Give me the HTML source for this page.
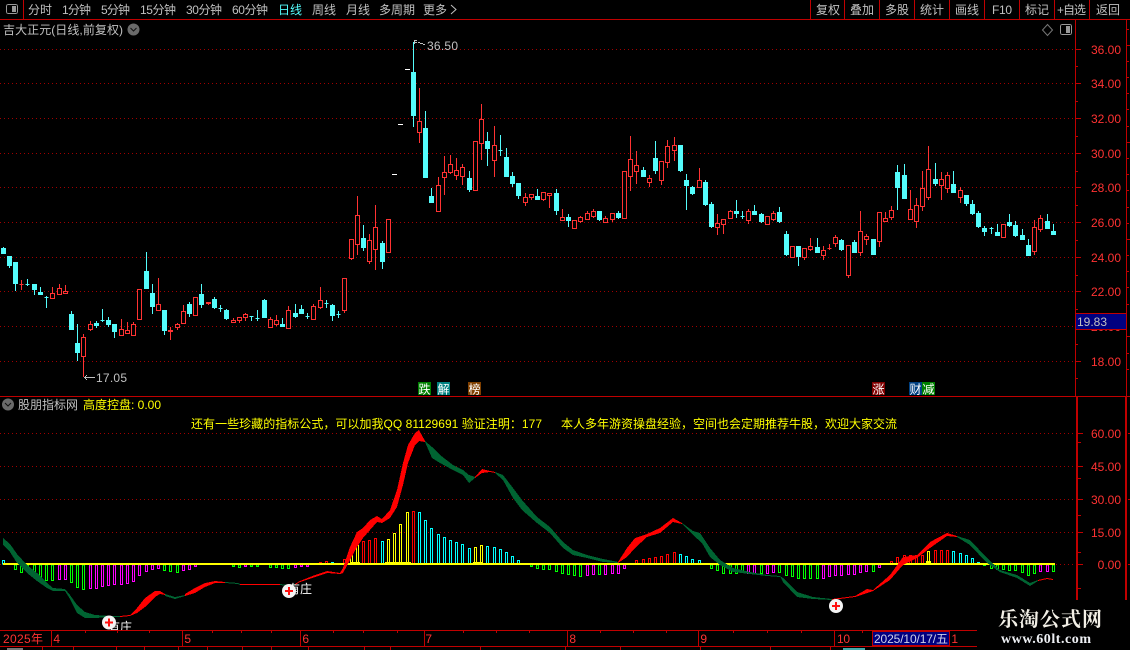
<!DOCTYPE html>
<html><head><meta charset="utf-8"><style>
html,body{margin:0;padding:0;background:#000;overflow:hidden}
svg{display:block}
text{font-family:"WenQuanYi Zen Hei","Liberation Sans","Noto Sans CJK SC",sans-serif;font-size:12px;fill:#c0c0c0}
.n{font-family:"Liberation Sans",sans-serif}
.r{fill:#ff3232;font-family:"Liberation Sans",sans-serif;text-anchor:end}
.y{fill:#ffff00}
.w{fill:#fff}
</style></head><body>
<svg width="1130" height="650" viewBox="0 0 1130 650" xmlns="http://www.w3.org/2000/svg" shape-rendering="crispEdges">
<defs><pattern id="d" width="4" height="1" patternUnits="userSpaceOnUse"><rect width="1" height="1" fill="#a00000"/></pattern></defs>
<rect width="1130" height="650" fill="#000"/>
<!-- grid -->
<g fill="url(#d)">
<rect y="49" width="1075" height="1"/><rect y="83" width="1075" height="1"/><rect y="118" width="1075" height="1"/><rect y="153" width="1075" height="1"/><rect y="187" width="1075" height="1"/><rect y="222" width="1075" height="1"/><rect y="257" width="1075" height="1"/><rect y="291" width="1075" height="1"/><rect y="326" width="1075" height="1"/><rect y="361" width="1075" height="1"/><rect y="433" width="1075" height="1"/><rect y="466" width="1075" height="1"/><rect y="499" width="1075" height="1"/><rect y="532" width="1075" height="1"/><rect y="564" width="1075" height="1"/>
</g>
<!-- frame -->
<path d="M0 19.5H1130M0 396.5H1130M23.5 0V19M810.5 0V19M844.5 0V19M879.5 0V19M914.5 0V19M949.5 0V19M984.5 0V19M1019.5 0V19M1054.5 0V19M1089.5 0V19M1075.5 19V396M1126.5 19V396M0 630.5H977M0 646.5H977" stroke="#c00000" fill="none"/>
<path d="M1077 397V600M1126 397V600" stroke="#c00000" stroke-width="2" fill="none"/>
<!-- axis ticks -->
<path d="M1075 49.5h6M1075 83.5h6M1075 118.5h6M1075 153.5h6M1075 187.5h6M1075 222.5h6M1075 257.5h6M1075 291.5h6M1075 361.5h6M1075 66.5h3M1075 101.5h3M1075 136.5h3M1075 171.5h3M1075 205.5h3M1075 240.5h3M1075 275.5h3M1075 309.5h3M1075 344.5h3M1075 378.5h3M1078 433.5h5M1078 466.5h5M1078 499.5h5M1078 532.5h5M1078 564.5h5M1078 442.5h3M1078 478.5h3M1078 515.5h3M1078 552.5h3M1078 588.5h3M1127 45.5h3M1127 142.5h3M1127 239.5h3M1127 336.5h3M1127 29.5h2M1127 61.5h2M1127 77.5h2M1127 93.5h2M1127 109.5h2M1127 126.5h2M1127 158.5h2M1127 174.5h2M1127 190.5h2M1127 207.5h2M1127 223.5h2M1127 255.5h2M1127 271.5h2M1127 287.5h2M1127 304.5h2M1127 353.5h2M1127 369.5h2M1128 433.5h2M1128 499.5h2M1128 564.5h2" stroke="#c00000" fill="none"/>
<!-- red wicks -->
<path fill="none" stroke="#ff3232" d="M21.5 280V290M52.5 287V298M59.5 284V295M65.5 285V293M83.5 334V377M90.5 321V331M121.5 319V335M127.5 322V333M133.5 322V335M158.5 278V311M170.5 327V340M177.5 323V330M183.5 305V323M208.5 302V305M233.5 318V322M239.5 317V323M245.5 313V321M270.5 317V327M276.5 315V326M288.5 306V328M313.5 304V319M320.5 287V309M344.5 278V313M351.5 239V260M357.5 196V255M369.5 234V264M375.5 205V270M419.5 88V143M438.5 177V211M444.5 156V195M450.5 155V174M456.5 158V180M462.5 164V185M481.5 104V160M494.5 126V177M525.5 193V206M531.5 194V200M543.5 192V201M549.5 193V208M562.5 209V220M580.5 216V223M587.5 211V220M593.5 209V218M605.5 216V222M612.5 213V222M630.5 136V191M636.5 151V184M649.5 175V187M661.5 161V185M667.5 140V168M674.5 137V161M699.5 168V187M717.5 214V235M723.5 219V234M730.5 210V219M748.5 209V224M773.5 211V221M804.5 248V260M810.5 238V251M823.5 246V260M829.5 244V250M835.5 235V247M848.5 245V278M860.5 211V256M866.5 234V245M879.5 212V247M885.5 212V222M891.5 206V220M910.5 190V219M916.5 198V228M922.5 171V211M928.5 146V200M941.5 172V200M947.5 172V193M960.5 187V203M1003.5 224V237M1034.5 220V255M1040.5 215V232"/>
<!-- red bodies -->
<path fill="#000" stroke="#ff3232" d="M19.5 284.5h4v0h-4zM50.5 293.5h4v5h-4zM57.5 288.5h4v6h-4zM63.5 291.5h4v2h-4zM81.5 337.5h4v19h-4zM88.5 324.5h4v5h-4zM119.5 329.5h4v6h-4zM125.5 330.5h4v3h-4zM131.5 324.5h4v11h-4zM137.5 289.5h4v30h-4zM156.5 304.5h4v6h-4zM168.5 330.5h4v1h-4zM175.5 324.5h4v3h-4zM181.5 311.5h4v12h-4zM193.5 297.5h4v18h-4zM206.5 302.5h4v1h-4zM231.5 320.5h4v2h-4zM237.5 317.5h4v3h-4zM243.5 314.5h4v3h-4zM268.5 319.5h4v8h-4zM274.5 320.5h4v4h-4zM286.5 310.5h4v18h-4zM311.5 306.5h4v13h-4zM318.5 300.5h4v7h-4zM342.5 278.5h4v32h-4zM349.5 239.5h4v19h-4zM355.5 215.5h4v29h-4zM367.5 240.5h4v21h-4zM373.5 227.5h4v22h-4zM386.5 219.5h4v33h-4zM417.5 121.5h4v11h-4zM436.5 185.5h4v26h-4zM442.5 172.5h4v5h-4zM448.5 164.5h4v8h-4zM454.5 170.5h4v5h-4zM460.5 167.5h4v9h-4zM473.5 141.5h4v49h-4zM479.5 119.5h4v24h-4zM492.5 145.5h4v15h-4zM523.5 197.5h4v5h-4zM529.5 194.5h4v3h-4zM541.5 192.5h4v7h-4zM547.5 193.5h4v2h-4zM560.5 217.5h4v3h-4zM572.5 220.5h4v8h-4zM578.5 217.5h4v4h-4zM585.5 213.5h4v6h-4zM591.5 211.5h4v5h-4zM603.5 218.5h4v4h-4zM610.5 213.5h4v6h-4zM622.5 171.5h4v47h-4zM628.5 159.5h4v17h-4zM634.5 165.5h4v6h-4zM647.5 178.5h4v4h-4zM659.5 161.5h4v19h-4zM665.5 146.5h4v16h-4zM672.5 145.5h4v5h-4zM697.5 180.5h4v7h-4zM715.5 223.5h4v4h-4zM721.5 219.5h4v5h-4zM728.5 211.5h4v7h-4zM746.5 211.5h4v9h-4zM765.5 216.5h4v8h-4zM771.5 213.5h4v6h-4zM790.5 246.5h4v11h-4zM802.5 248.5h4v9h-4zM808.5 246.5h4v3h-4zM821.5 250.5h4v5h-4zM827.5 248.5h4v0h-4zM833.5 237.5h4v6h-4zM846.5 245.5h4v30h-4zM858.5 231.5h4v21h-4zM864.5 236.5h4v3h-4zM877.5 212.5h4v29h-4zM883.5 218.5h4v3h-4zM889.5 210.5h4v7h-4zM908.5 209.5h4v10h-4zM914.5 205.5h4v16h-4zM920.5 188.5h4v18h-4zM926.5 169.5h4v28h-4zM939.5 179.5h4v6h-4zM945.5 175.5h4v13h-4zM958.5 190.5h4v7h-4zM1001.5 224.5h4v13h-4zM1032.5 227.5h4v24h-4zM1038.5 218.5h4v11h-4z"/>
<!-- cyan wicks -->
<path fill="none" stroke="#54fcfc" d="M3.5 247V254M9.5 256V268M15.5 262V291M27.5 279V286M34.5 284V295M40.5 287V294M46.5 296V308M71.5 311V329M77.5 324V361M96.5 321V328M102.5 309V322M108.5 317V327M114.5 324V338M146.5 252V289M152.5 284V314M164.5 310V335M189.5 302V317M201.5 284V308M214.5 297V309M220.5 305V312M226.5 309V320M251.5 316V321M257.5 310V321M264.5 299V318M282.5 318V326M295.5 304V318M301.5 305V314M307.5 313V319M326.5 300V308M332.5 304V321M338.5 311V318M363.5 225V251M382.5 241V269M413.5 42V127M425.5 111V177M431.5 188V203M469.5 171V192M487.5 132V166M500.5 135V156M506.5 148V176M512.5 172V187M518.5 183V199M537.5 189V199M556.5 189V215M568.5 214V227M599.5 211V221M618.5 211V219M643.5 167V176M655.5 141V174M680.5 145V172M686.5 174V210M692.5 186V195M705.5 180V206M711.5 202V228M736.5 200V218M742.5 211V219M754.5 205V215M761.5 213V223M779.5 207V223M786.5 231V256M798.5 246V266M817.5 238V252M841.5 239V251M854.5 240V253M873.5 239V254M897.5 165V210M904.5 164V199M935.5 163V186M953.5 171V192M966.5 195V206M972.5 200V215M978.5 211V228M984.5 226V236M991.5 227V234M997.5 224V235M1009.5 214V227M1015.5 221V237M1022.5 229V240M1028.5 239V256M1047.5 214V229M1053.5 224V235"/>
<!-- cyan bodies -->
<path fill="#54fcfc" stroke="#54fcfc" d="M1.5 248.5h4v5h-4zM7.5 256.5h4v9h-4zM13.5 262.5h4v21h-4zM25.5 284.5h4v0h-4zM32.5 284.5h4v5h-4zM38.5 292.5h4v2h-4zM44.5 297.5h4v0h-4zM69.5 314.5h4v15h-4zM75.5 343.5h4v9h-4zM94.5 323.5h4v2h-4zM100.5 320.5h4v0h-4zM106.5 320.5h4v4h-4zM112.5 324.5h4v7h-4zM144.5 271.5h4v17h-4zM150.5 293.5h4v13h-4zM162.5 310.5h4v20h-4zM187.5 304.5h4v9h-4zM199.5 294.5h4v10h-4zM212.5 299.5h4v8h-4zM218.5 308.5h4v0h-4zM224.5 310.5h4v8h-4zM249.5 316.5h4v0h-4zM255.5 318.5h4v0h-4zM262.5 300.5h4v17h-4zM280.5 324.5h4v2h-4zM293.5 313.5h4v3h-4zM299.5 309.5h4v4h-4zM305.5 316.5h4v0h-4zM324.5 303.5h4v0h-4zM330.5 305.5h4v10h-4zM336.5 314.5h4v0h-4zM361.5 238.5h4v9h-4zM380.5 243.5h4v18h-4zM411.5 72.5h4v43h-4zM423.5 128.5h4v49h-4zM429.5 196.5h4v6h-4zM467.5 178.5h4v11h-4zM485.5 141.5h4v7h-4zM498.5 150.5h4v0h-4zM504.5 157.5h4v19h-4zM510.5 176.5h4v7h-4zM516.5 183.5h4v12h-4zM535.5 196.5h4v3h-4zM554.5 193.5h4v17h-4zM566.5 217.5h4v3h-4zM597.5 211.5h4v8h-4zM616.5 213.5h4v4h-4zM641.5 170.5h4v6h-4zM653.5 158.5h4v12h-4zM678.5 145.5h4v25h-4zM684.5 180.5h4v5h-4zM690.5 187.5h4v6h-4zM703.5 182.5h4v22h-4zM709.5 204.5h4v22h-4zM734.5 211.5h4v2h-4zM740.5 216.5h4v0h-4zM752.5 211.5h4v3h-4zM759.5 214.5h4v7h-4zM777.5 212.5h4v9h-4zM784.5 234.5h4v20h-4zM796.5 246.5h4v10h-4zM815.5 247.5h4v5h-4zM839.5 240.5h4v9h-4zM852.5 242.5h4v10h-4zM871.5 239.5h4v15h-4zM895.5 172.5h4v15h-4zM902.5 175.5h4v23h-4zM933.5 179.5h4v4h-4zM951.5 184.5h4v8h-4zM964.5 195.5h4v8h-4zM970.5 204.5h4v9h-4zM976.5 213.5h4v13h-4zM982.5 228.5h4v3h-4zM989.5 228.5h4v0h-4zM995.5 232.5h4v3h-4zM1007.5 222.5h4v3h-4zM1013.5 225.5h4v10h-4zM1020.5 235.5h4v4h-4zM1026.5 245.5h4v10h-4zM1045.5 221.5h4v7h-4zM1051.5 231.5h4v3h-4z"/>
<!-- limit-up dashes -->
<path d="M405 69.5h5M398 124.5h5M392 174.5h5" stroke="#fff" fill="none"/>
<!-- price annotations -->
<path d="M414 40.5h3M414.5 40v4M414 42.5h3M418 42.5h2M420 43.5h3M423 44.5h2" stroke="#c0c0c0" fill="none"/>
<path d="M84 377.5h11M85 376.5h1M86 375.5h1M85 378.5h1M86 379.5h1" stroke="#c0c0c0" fill="none"/>
<text class="n" x="427" y="50" textLength="31">36.50</text>
<text class="n" x="96" y="382" textLength="31">17.05</text>
<!-- axis labels -->
<text class="r" x="1121" y="54">36.00</text>
<text class="r" x="1121" y="88">34.00</text>
<text class="r" x="1121" y="123">32.00</text>
<text class="r" x="1121" y="158">30.00</text>
<text class="r" x="1121" y="192">28.00</text>
<text class="r" x="1121" y="227">26.00</text>
<text class="r" x="1121" y="262">24.00</text>
<text class="r" x="1121" y="296">22.00</text>
<text class="r" x="1121" y="331">20.00</text>
<text class="r" x="1121" y="366">18.00</text>
<rect x="1075.5" y="313.5" width="51" height="16" fill="#000080" stroke="#c00000"/>
<text class="n" x="1077" y="326" textLength="30" fill="#c8c8e8">19.83</text>
<text class="r" x="1121" y="438">60.00</text>
<text class="r" x="1121" y="471">45.00</text>
<text class="r" x="1121" y="504">30.00</text>
<text class="r" x="1121" y="537">15.00</text>
<text class="r" x="1121" y="569">0.00</text>
<!-- toolbar -->
<g fill="none" stroke="#999">
<rect x="6.5" y="4.5" width="11" height="9" rx="2"/>
<rect x="1060.5" y="24.5" width="11" height="10" rx="2"/>
<path d="M1047.5 24.5l5 5.5-5 5.5-5-5.5z" stroke="#777" shape-rendering="auto"/>
</g>
<rect x="12" y="6" width="4" height="6" fill="#999"/>
<rect x="1066" y="26" width="4" height="7" fill="#999"/>
<text x="28" y="14" textLength="24">分时</text>
<text x="62" y="14" textLength="29">1分钟</text>
<text x="101" y="14" textLength="29">5分钟</text>
<text x="140" y="14" textLength="36">15分钟</text>
<text x="186" y="14" textLength="36">30分钟</text>
<text x="232" y="14" textLength="36">60分钟</text>
<text x="278" y="14" textLength="24" style="fill:#54fcfc">日线</text>
<text x="312" y="14" textLength="24">周线</text>
<text x="346" y="14" textLength="24">月线</text>
<text x="379" y="14" textLength="36">多周期</text>
<text x="423" y="14" textLength="24">更多</text>
<path d="M451 5l5 4.5-5 4.5" fill="none" stroke="#c0c0c0" shape-rendering="auto"/>
<text x="816" y="14" textLength="24">复权</text>
<text x="850" y="14" textLength="24">叠加</text>
<text x="885" y="14" textLength="24">多股</text>
<text x="920" y="14" textLength="24">统计</text>
<text x="955" y="14" textLength="24">画线</text>
<text class="n" x="992" y="14" textLength="20">F10</text>
<text x="1025" y="14" textLength="24">标记</text>
<text x="1057" y="14" textLength="29">+自选</text>
<text x="1096" y="14" textLength="24">返回</text>
<text x="3" y="34" textLength="120">吉大正元(日线,前复权)</text>
<circle cx="133.5" cy="29.5" r="6" fill="#6a6a6a" shape-rendering="auto"/>
<path d="M130.5 28l3 3 3-3" fill="none" stroke="#111" shape-rendering="auto"/>
<!-- tags -->
<rect x="418" y="382" width="13" height="13" fill="#008000"/><text class="w" x="418.5" y="393.5">跌</text>
<rect x="437" y="382" width="13" height="13" fill="#008080"/><text class="w" x="437.5" y="393.5">解</text>
<rect x="468" y="382" width="13" height="13" fill="#804000"/><text class="w" x="468.5" y="393.5">榜</text>
<rect x="872" y="382" width="13" height="13" fill="#800000"/><text class="w" x="872.5" y="393.5">涨</text>
<rect x="909" y="382" width="13" height="13" fill="#004080"/><text class="w" x="909.5" y="393.5">财</text>
<rect x="922" y="382" width="13" height="13" fill="#008000"/><text class="w" x="922.5" y="393.5">减</text>
<!-- lower titles -->
<circle cx="8" cy="404.5" r="6" fill="#6a6a6a" shape-rendering="auto"/>
<path d="M5 403l3 3 3-3" fill="none" stroke="#111" shape-rendering="auto"/>
<text x="18" y="409" textLength="60">股朋指标网</text>
<text class="y" x="83" y="409" textLength="78">高度控盘: 0.00</text>
<text class="y" x="191" y="428" textLength="351">还有一些珍藏的指标公式，可以加我QQ 81129691 验证注明：177</text>
<text class="y" x="561" y="428" textLength="336">本人多年游资操盘经验，空间也会定期推荐牛股，欢迎大家交流</text>
<!-- bars -->
<g fill="none">
<path stroke="#00ff00" d="M14.5 565h2V569.5h-2zM20.5 565h2V572.5h-2zM26.5 565h2V570.5h-2zM33.5 565h2V573.5h-2zM39.5 565h2V577.5h-2zM45.5 565h2V580.5h-2zM51.5 565h2V580.5h-2zM70.5 565h2V582.5h-2zM76.5 565h2V587.5h-2zM82.5 565h2V589.5h-2zM163.5 565h2V570.5h-2zM169.5 565h2V571.5h-2zM176.5 565h2V572.5h-2zM232.5 565h2V566.5h-2zM238.5 565h2V567.5h-2zM250.5 565h2V566.5h-2zM256.5 565h2V566.5h-2zM269.5 565h2V567.5h-2zM275.5 565h2V567.5h-2zM281.5 565h2V568.5h-2zM287.5 565h2V568.5h-2zM530.5 565h2V566.5h-2zM536.5 565h2V568.5h-2zM542.5 565h2V569.5h-2zM548.5 565h2V569.5h-2zM555.5 565h2V571.5h-2zM561.5 565h2V573.5h-2zM567.5 565h2V574.5h-2zM573.5 565h2V575.5h-2zM579.5 565h2V576.5h-2zM598.5 565h2V574.5h-2zM710.5 565h2V568.5h-2zM716.5 565h2V570.5h-2zM722.5 565h2V573.5h-2zM729.5 565h2V573.5h-2zM735.5 565h2V573.5h-2zM741.5 565h2V572.5h-2zM760.5 565h2V573.5h-2zM778.5 565h2V572.5h-2zM785.5 565h2V575.5h-2zM791.5 565h2V576.5h-2zM797.5 565h2V578.5h-2zM803.5 565h2V578.5h-2zM809.5 565h2V578.5h-2zM816.5 565h2V578.5h-2zM872.5 565h2V571.5h-2zM983.5 565h2V565.5h-2zM990.5 565h2V568.5h-2zM996.5 565h2V569.5h-2zM1002.5 565h2V569.5h-2zM1008.5 565h2V570.5h-2zM1014.5 565h2V570.5h-2zM1021.5 565h2V572.5h-2zM1027.5 565h2V575.5h-2zM1033.5 565h2V573.5h-2zM1052.5 565h2V571.5h-2z"/>
<path stroke="#ff00ff" d="M58.5 565h2V579.5h-2zM64.5 565h2V579.5h-2zM89.5 565h2V588.5h-2zM95.5 565h2V588.5h-2zM101.5 565h2V586.5h-2zM107.5 565h2V585.5h-2zM113.5 565h2V584.5h-2zM120.5 565h2V584.5h-2zM126.5 565h2V583.5h-2zM132.5 565h2V581.5h-2zM138.5 565h2V575.5h-2zM145.5 565h2V571.5h-2zM151.5 565h2V569.5h-2zM157.5 565h2V568.5h-2zM182.5 565h2V570.5h-2zM188.5 565h2V569.5h-2zM194.5 565h2V566.5h-2zM244.5 565h2V566.5h-2zM294.5 565h2V567.5h-2zM300.5 565h2V566.5h-2zM306.5 565h2V566.5h-2zM586.5 565h2V575.5h-2zM592.5 565h2V574.5h-2zM604.5 565h2V574.5h-2zM611.5 565h2V573.5h-2zM617.5 565h2V573.5h-2zM623.5 565h2V568.5h-2zM747.5 565h2V573.5h-2zM753.5 565h2V573.5h-2zM766.5 565h2V573.5h-2zM772.5 565h2V572.5h-2zM822.5 565h2V578.5h-2zM828.5 565h2V576.5h-2zM834.5 565h2V575.5h-2zM840.5 565h2V575.5h-2zM847.5 565h2V574.5h-2zM853.5 565h2V574.5h-2zM859.5 565h2V572.5h-2zM865.5 565h2V571.5h-2zM878.5 565h2V567.5h-2zM1039.5 565h2V571.5h-2zM1046.5 565h2V571.5h-2z"/>
<path stroke="#ff0000" d="M319.5 562.5h2V564h-2zM325.5 561.5h2V564h-2zM343.5 559.5h2V564h-2zM362.5 541.5h2V564h-2zM368.5 540.5h2V564h-2zM374.5 538.5h2V564h-2zM412.5 511.5h2V564h-2zM635.5 560.5h2V564h-2zM642.5 559.5h2V564h-2zM648.5 558.5h2V564h-2zM654.5 557.5h2V564h-2zM660.5 556.5h2V564h-2zM666.5 554.5h2V564h-2zM673.5 552.5h2V564h-2zM890.5 561.5h2V564h-2zM896.5 557.5h2V564h-2zM903.5 555.5h2V564h-2zM909.5 555.5h2V564h-2zM915.5 555.5h2V564h-2zM921.5 555.5h2V564h-2zM934.5 550.5h2V564h-2zM940.5 550.5h2V564h-2zM946.5 550.5h2V564h-2z"/>
<path stroke="#ffff00" d="M350.5 553.5h2V564h-2zM356.5 545.5h2V564h-2zM387.5 539.5h2V564h-2zM393.5 533.5h2V564h-2zM399.5 524.5h2V564h-2zM406.5 512.5h2V564h-2zM474.5 547.5h2V564h-2zM480.5 545.5h2V564h-2zM927.5 551.5h2V564h-2z"/>
<path stroke="#00ffff" d="M2.5 560.5h2V564h-2zM331.5 562.5h2V564h-2zM381.5 541.5h2V564h-2zM418.5 512.5h2V564h-2zM424.5 520.5h2V564h-2zM430.5 528.5h2V564h-2zM437.5 534.5h2V564h-2zM443.5 537.5h2V564h-2zM449.5 540.5h2V564h-2zM455.5 542.5h2V564h-2zM461.5 544.5h2V564h-2zM468.5 548.5h2V564h-2zM486.5 546.5h2V564h-2zM493.5 547.5h2V564h-2zM499.5 549.5h2V564h-2zM505.5 552.5h2V564h-2zM511.5 556.5h2V564h-2zM517.5 560.5h2V564h-2zM679.5 554.5h2V564h-2zM685.5 556.5h2V564h-2zM691.5 559.5h2V564h-2zM698.5 560.5h2V564h-2zM952.5 551.5h2V564h-2zM959.5 553.5h2V564h-2zM965.5 555.5h2V564h-2zM971.5 558.5h2V564h-2zM977.5 562.5h2V564h-2z"/>
</g>
<!-- zero line -->
<rect x="3" y="563" width="1052" height="2" fill="#ffff00"/>
<path d="M350 562h10v1h-10zM385 562h26v1h-26zM473 562h10v1h-10zM926 561h5v2h-5z" fill="#ffff00"/>
<!-- ribbon -->
<g fill="#006432">
<polygon points="3,538 10,544 17,554 27,565 37,573 47,583 53,588 65,589 70,595 77,605 85,612 95,615 110,616 120,616 120,617 110,617 95,618 85,618 77,613 70,599 65,591 53,591 47,588 37,581 27,573 17,563 10,552 3,545"/>
<polygon points="165,594 175,597 185,595 185,596 175,599 165,596"/>
<polygon points="225,582 238,583 240,584 240,585 238,584 225,583"/>
<polygon points="280,584 288,585 295,584 295,585 288,586 280,585"/>
<polygon points="425,441 432,447 440,455 453,465 463,470 469,475 475,477 475,478 469,483 463,475 453,470 440,463 432,458 425,442"/>
<polygon points="495,472 503,475 513,488 522,500 537,517 550,527 563,542 573,550 587,555 603,559 618,562 618,563 603,562 587,558 573,555 563,548 550,533 537,523 522,510 513,498 503,480 495,473"/>
<polygon points="682,523 693,531 700,533 710,548 720,560 733,568 750,572 767,575 780,576 780,577 767,576 750,574 733,572 720,565 710,557 702,543 693,535 682,524"/>
<polygon points="780,576 783,578 797,592 813,597 832,599 832,600 813,599 797,597 783,582"/>
<polygon points="957,536 970,540 987,558 1000,570 1017,575 1030,583 1038,580 1038,581 1030,586 1017,578 1000,572 987,563 970,545 957,537"/>
</g>
<g fill="#ff0000">
<polygon points="120,616 130,615 137,608 145,598 155,591 160,591 165,594 165,595 160,594 155,597 145,607 137,613 130,616 120,617"/>
<polygon points="185,594 195,588 205,583 215,581 225,582 225,583 215,583 205,587 195,593 185,596"/>
<rect x="240" y="584" width="40" height="1"/>
<polygon points="295,584 300,581 315,575 327,571 340,573 343,568 350,547 357,532 363,528 370,520 377,516 382,519 390,510 397,490 403,463 408,445 415,433 419,430 425,441 425,442 419,441 415,445 408,463 403,485 397,507 390,518 382,523 377,522 370,530 363,538 357,547 350,560 343,573 340,574 327,573 315,577 300,582 295,585"/>
<polygon points="475,477 482,469 490,471 495,472 495,473 490,472 482,473 475,478"/>
<polygon points="618,562 627,548 635,538 647,534 660,528 673,518 682,523 682,524 673,522 660,533 647,537 635,548 627,557 618,563"/>
<polygon points="832,599 855,596 867,589 873,590 890,575 903,557 917,555 930,542 947,533 957,536 957,537 947,536 930,548 917,558 903,565 890,580 873,591 867,593 855,597 832,600"/>
<polygon points="1038,580 1047,578 1053,579 1053,580 1047,579 1038,581"/>
</g>
<!-- markers -->
<text class="w" x="288" y="593" textLength="24">有庄</text>
<text class="w" x="108" y="631" textLength="24">有庄</text>
<rect x="100" y="631" width="40" height="8" fill="#000"/>
<g shape-rendering="auto">
<circle cx="109" cy="622.5" r="7" fill="#f4f4f4"/>
<circle cx="289" cy="591" r="7" fill="#f4f4f4"/>
<circle cx="836" cy="606" r="7" fill="#f4f4f4"/>
</g>
<path d="M105 621.5h8v2h-8zM108 618.5h2v8h-2zM285 590h8v2h-8zM288 587h2v8h-2zM832 605h8v2h-8zM835 602h2v8h-2z" fill="#ff1010"/>
<!-- date axis -->
<path d="M0 630.5H977M0 646.5H977M51.5 631V646M182.5 631V646M300.5 631V646M424.5 631V646M567.5 631V646M698.5 631V646M834.5 631V646M85.5 631v2M117.5 631v2M149.5 631v2M212.5 631v2M241.5 631v2M271.5 631v2M333.5 631v2M363.5 631v2M397.5 631v2M463.5 631v2M496.5 631v2M529.5 631v2M600.5 631v2M633.5 631v2M666.5 631v2M733.5 631v2M767.5 631v2M801.5 631v2M862.5 631v2M42.5 647v3M73.5 647v3M116.5 647v3M144.5 647v3M178.5 647v3M207.5 647v3M242.5 647v3M271.5 647v3M308.5 647v3M364.5 647v3M390.5 647v3M480.5 647v3M565.5 647v3M620.5 647v3M700.5 647v3M770.5 647v3M830.5 647v3" stroke="#c00000" fill="none"/>
<text x="3" y="643" textLength="40" style="fill:#ff3232">2025年</text>
<text class="r" x="60" y="643">4</text>
<text class="r" x="191" y="643">5</text>
<text class="r" x="309" y="643">6</text>
<text class="r" x="432" y="643">7</text>
<text class="r" x="576" y="643">8</text>
<text class="r" x="707" y="643">9</text>
<text class="r" x="850" y="643" textLength="13">10</text>
<text class="r" x="958" y="643">1</text>
<rect x="872.5" y="631.5" width="77" height="14" fill="#000080" stroke="#c00000"/>
<text x="874" y="643" textLength="74" style="fill:#d0d0e8">2025/10/17/五</text>
<path d="M7 648h16v2H7z" fill="#777"/><path d="M843 648h22v2h-22z" fill="#4aa"/>
<!-- watermark -->
<rect x="978" y="600" width="152" height="50" fill="#000"/>
<text x="998" y="626" textLength="104" style="font-family:'Liberation Serif','Noto Serif CJK SC',serif;font-weight:700;font-size:20px;fill:#f2efe6">乐淘公式网</text>
<text x="1001" y="643" textLength="90" style="font-family:'Liberation Serif',serif;font-weight:700;font-size:14px;fill:#eef0f4">www.60lt.com</text>
</svg>
</body></html>
